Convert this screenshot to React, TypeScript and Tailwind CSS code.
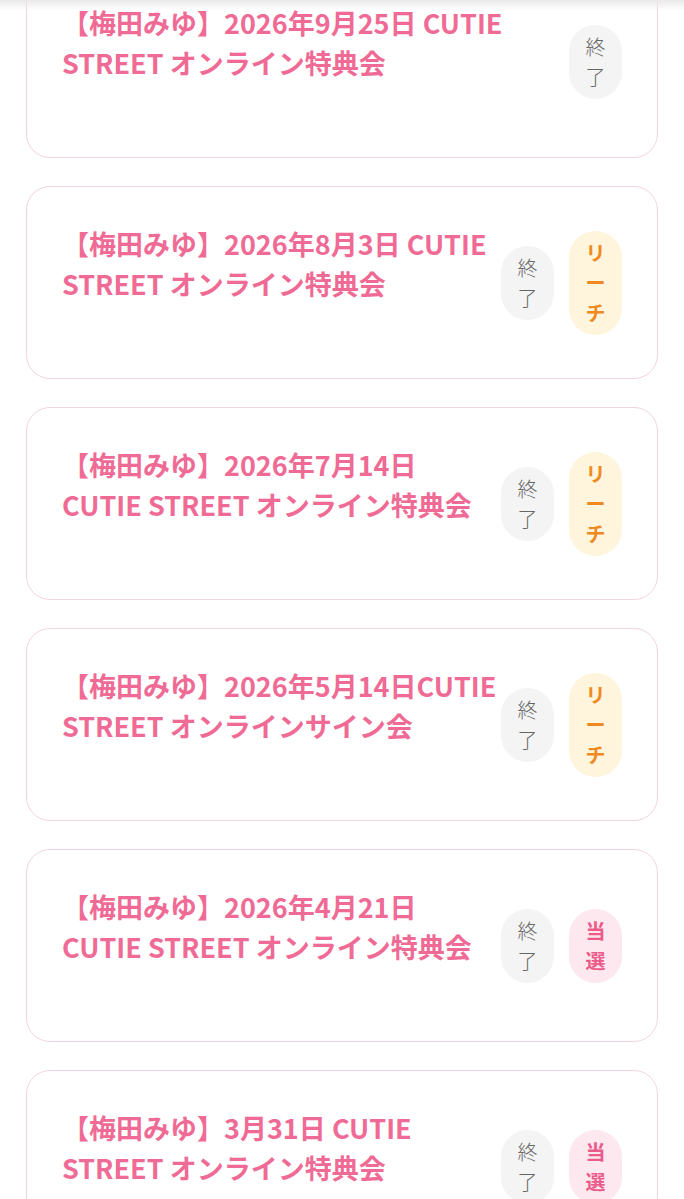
import React from 'react';

type Badge = 'ended' | 'reach' | 'won';

const events: { title: string; badges: Badge[] }[] = [
  { title: '【梅田みゆ】2026年9月25日 CUTIE STREET オンライン特典会', badges: ['ended'] },
  { title: '【梅田みゆ】2026年8月3日 CUTIE STREET オンライン特典会', badges: ['ended', 'reach'] },
  { title: '【梅田みゆ】2026年7月14日 CUTIE STREET オンライン特典会', badges: ['ended', 'reach'] },
  { title: '【梅田みゆ】2026年5月14日CUTIE STREET オンラインサイン会', badges: ['ended', 'reach'] },
  { title: '【梅田みゆ】2026年4月21日 CUTIE STREET オンライン特典会', badges: ['ended', 'won'] },
  { title: '【梅田みゆ】3月31日 CUTIE STREET オンライン特典会', badges: ['ended', 'won'] },
];

const badgeStyles: Record<Badge, { label: string; className: string }> = {
  ended: { label: '終了', className: 'bg-[#f4f4f4] text-[#666666] font-light' },
  reach: { label: 'リーチ', className: 'bg-[#fff5dc] text-[#ef8a22] font-bold' },
  won: { label: '当選', className: 'bg-[#fde8ef] text-[#ec5a8a] font-bold' },
};

function StatusBadge({ type }: { type: Badge }) {
  const s = badgeStyles[type];
  return (
    <span
      className={`flex w-[53px] flex-col items-center rounded-full py-[7px] text-[20px] leading-[30px] ${s.className}`}
    >
      {s.label.split('').map((ch, i) => (
        <span key={i}>{ch}</span>
      ))}
    </span>
  );
}

export default function App() {
  return (
    <div
      className="relative min-h-screen overflow-hidden bg-white"
      style={{ fontFamily: '"Noto Sans CJK JP", "Noto Sans", sans-serif' }}
    >
      {/* shadow of the header above the viewport */}
      <div className="pointer-events-none absolute inset-x-0 top-0 z-10 h-[10px] bg-gradient-to-b from-[#e9e9e9] to-transparent" />

      <div className="mt-[-35px] flex flex-col gap-[28px] px-[26px] pb-10">
        {events.map((ev) => (
          <div
            key={ev.title}
            className="flex items-center gap-[2px] rounded-[24px] border-[1.5px] border-[#f1d5df] bg-white pl-[35px] pr-[35px]"
          >
            <div className="min-w-0 flex-1 self-start pt-[37px] pb-[74px]">
              <p className="text-[27px] font-bold leading-[40px] text-[#ef6b95]">{ev.title}</p>
            </div>
            <div className="flex shrink-0 items-center gap-[15px]">
              {ev.badges.map((b) => (
                <StatusBadge key={b} type={b} />
              ))}
            </div>
          </div>
        ))}
      </div>
    </div>
  );
}
